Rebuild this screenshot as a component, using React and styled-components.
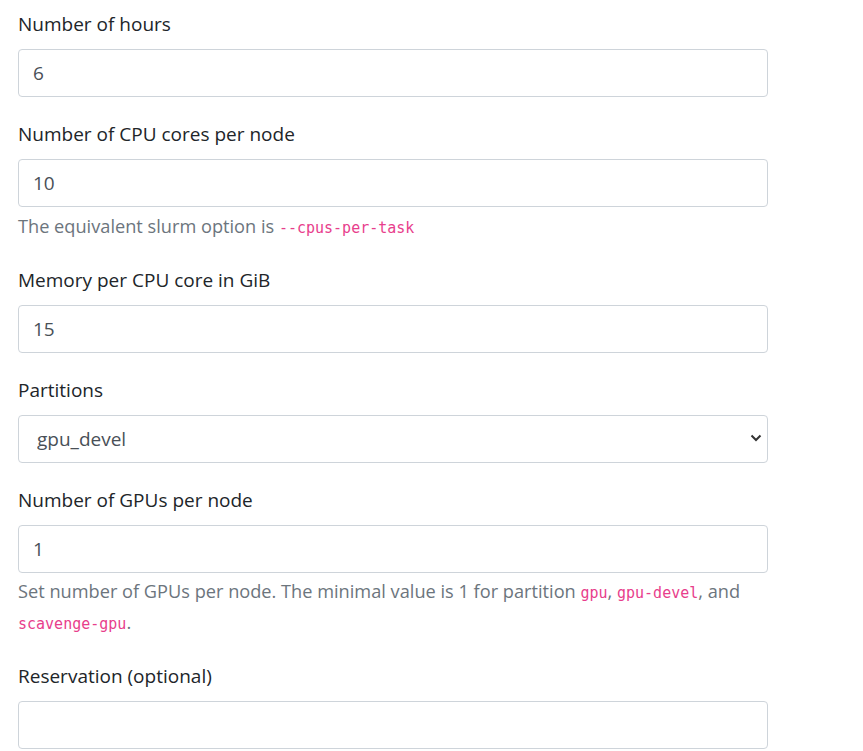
import React from "react";
import styled, { createGlobalStyle } from "styled-components";

const GlobalStyle = createGlobalStyle`
  body {
    margin: 0;
    background: #fff;
    font-family: "Open Sans", "Noto Sans", sans-serif;
    color: #212529;
  }
`;

const Page = styled.form`
  width: 750px;
  padding: 9px 0 0 18px;
`;

const Group = styled.div`
  margin-bottom: 22px;
`;

const Label = styled.label`
  display: block;
  font-size: 19px;
  line-height: 30px;
  margin-bottom: 10px;
`;

const Input = styled.input`
  display: block;
  box-sizing: border-box;
  width: 100%;
  height: 48px;
  padding: 8px 14px;
  font-family: inherit;
  font-size: 19px;
  color: #495057;
  background: #fff;
  border: 1px solid #ced4da;
  border-radius: 4px;
  outline: none;
`;

const SelectWrap = styled.div`
  position: relative;
`;

const Select = styled.select`
  display: block;
  box-sizing: border-box;
  width: 100%;
  height: 48px;
  padding: 8px 36px 8px 18px;
  font-family: inherit;
  font-size: 19px;
  color: #495057;
  background: #fff;
  border: 1px solid #ced4da;
  border-radius: 4px;
  appearance: none;
  outline: none;
`;

const Chevron = styled.svg`
  position: absolute;
  right: 6px;
  top: 19px;
  pointer-events: none;
`;

const Help = styled.p`
  margin: 4px 0 0;
  font-size: 18.2px;
  line-height: ${(p) => (p.$tight ? "29px" : "30px")};
  color: #6c757d;
`;

const Code = styled.code`
  font-family: "DejaVu Sans Mono", "Liberation Mono", monospace;
  font-size: 15px;
  color: #e83e8c;
`;

export default function App() {
  return (
    <>
      <GlobalStyle />
      <Page>
        <Group>
          <Label>Number of hours</Label>
          <Input defaultValue="6" />
        </Group>
        <Group>
          <Label>Number of CPU cores per node</Label>
          <Input defaultValue="10" />
          <Help>
            The equivalent slurm option is <Code>--cpus-per-task</Code>
          </Help>
        </Group>
        <Group>
          <Label>Memory per CPU core in GiB</Label>
          <Input defaultValue="15" />
        </Group>
        <Group>
          <Label>Partitions</Label>
          <SelectWrap>
            <Select defaultValue="gpu_devel">
              <option value="gpu_devel">gpu_devel</option>
            </Select>
            <Chevron width="12" height="8" viewBox="0 0 12 8">
              <path d="M1.5 1.5 L6 6 L10.5 1.5" fill="none" stroke="#333" strokeWidth="2" />
            </Chevron>
          </SelectWrap>
        </Group>
        <Group>
          <Label>Number of GPUs per node</Label>
          <Input defaultValue="1" />
          <Help $tight>
            Set number of GPUs per node. The minimal value is 1 for partition{" "}
            <Code>gpu</Code>, <Code>gpu-devel</Code>, and <Code>scavenge-gpu</Code>.
          </Help>
        </Group>
        <Group>
          <Label>Reservation (optional)</Label>
          <Input defaultValue="" />
        </Group>
      </Page>
    </>
  );
}
